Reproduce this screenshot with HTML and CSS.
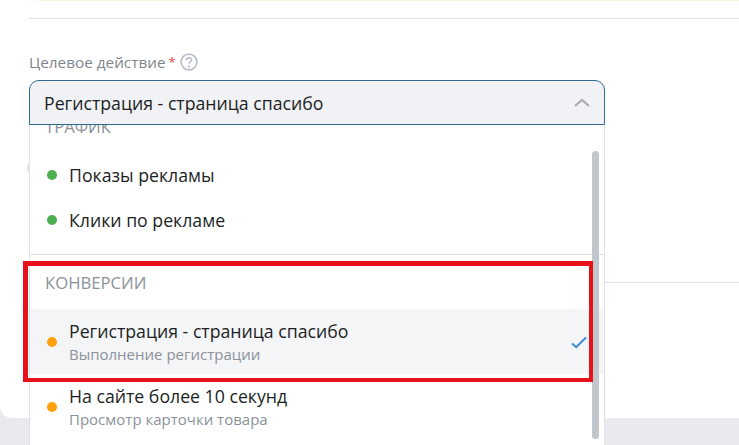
FILE: index.html
```html
<!DOCTYPE html>
<html lang="en">
<head>
    <meta charset="UTF-8">
    <title>Целевое действие</title>
    <link rel="stylesheet" href="styles.css">
</head>
<body>
    <div class="card">
        <div class="notice-strip"></div>
        <div class="separator"></div>
        <div class="form">
            <div class="field-label">
                <span>Целевое действие</span>
                <span class="required">*</span>
                <svg class="help-icon" width="18" height="18" viewBox="0 0 18 18">
                    <circle cx="9" cy="9" r="7.9" fill="none" stroke="#bcc1c9" stroke-width="1.8"/>
                    <path d="M6.4 7.2c0-1.5 1.1-2.4 2.6-2.4s2.6 1 2.6 2.2c0 1.9-2.6 1.9-2.6 3.7" fill="none" stroke="#bcc1c9" stroke-width="1.7"/>
                    <circle cx="9" cy="13.4" r="1.1" fill="#bcc1c9"/>
                </svg>
            </div>

            <div class="select-box">
                <span>Регистрация - страница спасибо</span>
                <svg width="16" height="10" viewBox="0 0 16 10">
                    <path d="M1 8l7-6 7 6" fill="none" stroke="#a9adb6" stroke-width="2.2"/>
                </svg>
            </div>

            <div class="behind-circle"></div>

            <div class="dropdown">
                <div class="scroll-thumb"></div>
                <div class="group-title group-title-cut">ТРАФИК</div>
                <div class="option">
                    <span class="dot dot-green"></span>
                    <span>Показы рекламы</span>
                </div>
                <div class="option">
                    <span class="dot dot-green"></span>
                    <span>Клики по рекламе</span>
                </div>
                <div class="divider"></div>
                <div class="group-title">КОНВЕРСИИ</div>
                <div class="option option-two-line option-active">
                    <span class="dot dot-orange"></span>
                    <div>
                        <div>Регистрация - страница спасибо</div>
                        <div class="option-sub">Выполнение регистрации</div>
                    </div>
                    <svg class="check" width="16" height="13" viewBox="0 0 16 13">
                        <path d="M1 7.5l4.2 3.7L15 1.5" fill="none" stroke="#3a8ad2" stroke-width="2"/>
                    </svg>
                </div>
                <div class="option option-two-line">
                    <span class="dot dot-orange"></span>
                    <div>
                        <div>На сайте более 10 секунд</div>
                        <div class="option-sub">Просмотр карточки товара</div>
                    </div>
                </div>
            </div>
            <div class="highlight"></div>
        </div>
        <div class="right-line"></div>
    </div>
</body>
</html>
```

FILE: styles.css
```css
html,
body {
    margin: 0;
    padding: 0;
    height: 445px;
    overflow: hidden;
}

body {
    font-family: 'Open Sans', 'Noto Sans', sans-serif;
    background-color: #e9eaee;
    color: #1c1f24;
}

.card {
    position: relative;
    height: 418px;
    background: white;
    border-radius: 0 0 0 12px;
}

.notice-strip {
    height: 1px;
    margin-left: 36px;
    background-color: #fdf6e3;
}

.separator {
    height: 1px;
    margin: 17px 0 0 29px;
    background-color: #e1e3e6;
}

.form {
    position: relative;
    margin-left: 29px;
    width: 576px;
    padding-top: 33px;
}

.field-label {
    display: flex;
    align-items: center;
    height: 20px;
    margin-bottom: 8px;
    font-size: 15.3px;
    color: #7f858d;
}

.required {
    margin-left: 3px;
    font-size: 13px;
    color: #e5484d;
}

.help-icon {
    margin-left: 4px;
}

.select-box {
    position: relative;
    z-index: 2;
    display: flex;
    justify-content: space-between;
    align-items: center;
    box-sizing: border-box;
    height: 45px;
    padding: 0 14px 0 14px;
    font-size: 17.7px;
    background-color: #f1f2f5;
    border: 1px solid #2f6a92;
    border-radius: 10px 10px 0 0;
}

.behind-circle {
    position: absolute;
    top: 138px;
    left: -2px;
    width: 22px;
    height: 22px;
    background-color: #e6e7ea;
    border-radius: 50%;
}

.dropdown {
    position: relative;
    box-sizing: border-box;
    height: 330px;
    margin-top: -10px;
    background: white;
    border-left: 1px solid #dfe1e5;
    border-right: 1px solid #dfe1e5;
    font-size: 17.7px;
}

.scroll-thumb {
    position: absolute;
    z-index: 1;
    top: 36px;
    right: 5px;
    width: 7px;
    height: 288px;
    background-color: #c1c6cd;
    border-radius: 4px;
}

.group-title {
    padding-left: 15px;
    font-size: 16.7px;
    line-height: 22px;
    color: #8b929b;
}

.group-title-cut {
    padding-top: 1px;
    margin-bottom: 14px;
}

.option {
    display: flex;
    align-items: center;
    height: 45px;
    padding-left: 17px;
}

.option-two-line {
    position: relative;
    height: 65px;
    line-height: 22px;
}

.option-active {
    background-color: #f4f5f7;
    margin-top: 15px;
}

.option-sub {
    margin-top: 2px;
    font-size: 15px;
    line-height: 20px;
    color: #8b929b;
}

.dot {
    width: 10px;
    height: 10px;
    margin-right: 12px;
    border-radius: 50%;
}

.dot-green {
    background-color: #4caf50;
}

.dot-orange {
    background-color: #ffa00a;
}

.check {
    position: absolute;
    top: 27px;
    right: 17px;
}

.divider {
    height: 1px;
    margin: 12px 0 17px;
    background-color: #dcdee2;
}

.highlight {
    position: absolute;
    z-index: 2;
    top: 242px;
    left: -6px;
    width: 570px;
    height: 121px;
    box-sizing: border-box;
    border: 4px solid #e8101a;
    border-top-width: 5px;
    border-left-width: 5px;
}

.right-line {
    position: absolute;
    top: 282px;
    left: 605px;
    right: 0;
    height: 1px;
    background-color: #e1e3e6;
}
```
